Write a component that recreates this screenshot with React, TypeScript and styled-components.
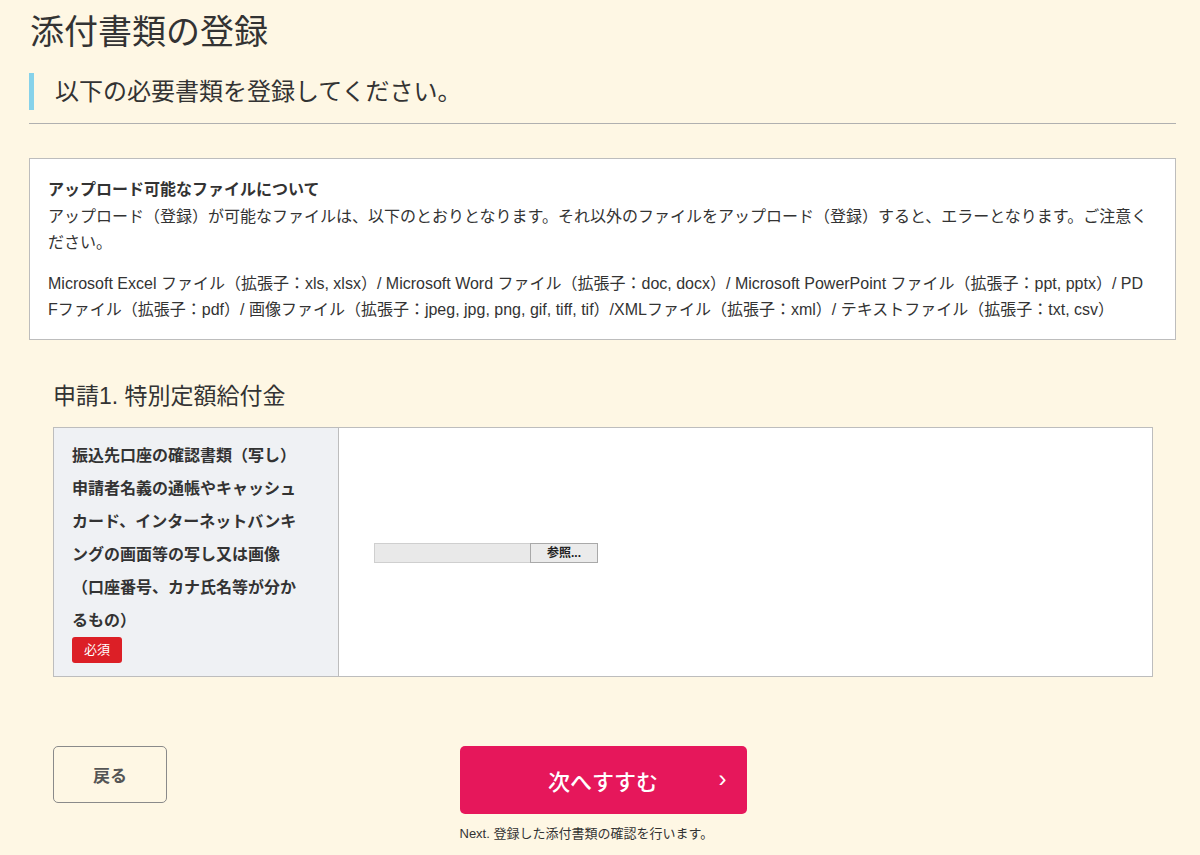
import React from "react";
import styled, { createGlobalStyle } from "styled-components";

const GlobalStyle = createGlobalStyle`
  html, body {
    margin: 0;
    padding: 0;
    background: #fef7e4;
  }
  body {
    font-family: "Liberation Sans", "Noto Sans CJK JP", sans-serif;
    color: #333;
  }
  * { box-sizing: border-box; }
`;

const Page = styled.div`
  width: 1200px;
  min-height: 855px;
  padding: 10px 24px 20px 29px;
`;

const Title = styled.h1`
  margin: 0;
  font-size: 34px;
  line-height: 44px;
  font-weight: 400;
  color: #333;
  padding-left: 1px;
`;

const Lead = styled.h2`
  margin: 19px 0 0;
  border-left: 5px solid #86d2ea;
  padding-left: 21px;
  font-size: 24px;
  line-height: 37px;
  font-weight: 400;
  color: #333;
`;

const Rule = styled.hr`
  margin: 13px 0 0;
  border: none;
  border-top: 1px solid #b0b0b0;
  height: 0;
`;

const InfoBox = styled.div`
  margin-top: 34px;
  background: #fff;
  border: 1px solid #bdbdbd;
  padding: 17px 24px 16px 18px;
  font-size: 16px;
  line-height: 26px;
  word-break: break-all;
`;

const InfoTitle = styled.div`
  font-weight: 700;
  line-height: 28px;
`;

const InfoPara = styled.p<{ $gap?: number }>`
  margin: ${(p) => p.$gap ?? 0}px 0 0;
`;

const Section = styled.section`
  padding: 0 23px 0 24px;
`;

const SectionTitle = styled.h3`
  margin: 41px 0 0;
  font-size: 23px;
  line-height: 30px;
  font-weight: 400;
  color: #333;
`;

const FormTable = styled.div`
  margin-top: 16px;
  display: grid;
  grid-template-columns: 285px 1fr;
  border: 1px solid #bdbdbd;
  background: #fff;
`;

const LabelCell = styled.div`
  background: #eff1f4;
  border-right: 1px solid #bdbdbd;
  padding: 11px 34px 13px 18px;
  font-size: 16px;
  line-height: 33px;
  font-weight: 700;
  color: #333;
`;

const Required = styled.span`
  display: block;
  width: fit-content;
  background: #dc1f26;
  color: #fff;
  font-size: 13px;
  font-weight: 400;
  line-height: 26px;
  padding: 0 12px;
  border-radius: 3px;
`;

const InputCell = styled.div`
  display: flex;
  align-items: center;
  padding-left: 35px;
`;

const FileInput = styled.div`
  display: flex;
  height: 20px;
  margin-top: 2px;
`;

const FileField = styled.div`
  width: 156px;
  height: 20px;
  background: #e9e9e9;
  border: 1px solid #cfcfcf;
  border-right: none;
`;

const FileButton = styled.div`
  width: 68px;
  height: 20px;
  background: #ebebeb;
  border: 1px solid #a9a9a9;
  font-size: 12px;
  font-weight: 700;
  line-height: 18px;
  text-align: center;
  color: #222;
`;

const ButtonRow = styled.div`
  margin-top: 69px;
  display: grid;
  grid-template-columns: 1fr auto 1fr;
  align-items: start;
`;

const BackButton = styled.button`
  justify-self: start;
  width: 114px;
  height: 57px;
  border: 1px solid #8a8a8a;
  border-radius: 5px;
  background: transparent;
  font-family: inherit;
  font-size: 17px;
  font-weight: 700;
  color: #555;
  cursor: pointer;
`;

const NextWrap = styled.div`
  display: flex;
  flex-direction: column;
`;

const NextButton = styled.button`
  position: relative;
  width: 287px;
  height: 68px;
  border: none;
  border-radius: 5px;
  background: #e6175b;
  color: #fff;
  font-family: inherit;
  font-size: 22px;
  font-weight: 500;
  display: flex;
  align-items: center;
  justify-content: center;
  cursor: pointer;
`;

const Chevron = styled.span`
  position: absolute;
  right: 20px;
  top: 50%;
  transform: translateY(-54%);
  font-size: 24px;
  font-weight: 400;
`;

const Caption = styled.div`
  margin-top: 11px;
  font-size: 13px;
  line-height: 18px;
  color: #333;
`;

export default function App() {
  return (
    <>
      <GlobalStyle />
      <Page>
        <Title>添付書類の登録</Title>
        <Lead>以下の必要書類を登録してください。</Lead>
        <Rule />
        <InfoBox>
          <InfoTitle>アップロード可能なファイルについて</InfoTitle>
          <InfoPara>
            アップロード（登録）が可能なファイルは、以下のとおりとなります。それ以外のファイルをアップロード（登録）すると、エラーとなります。ご注意ください。
          </InfoPara>
          <InfoPara $gap={15}>
            Microsoft Excel ファイル（拡張子：xls, xlsx）/ Microsoft Word ファイル（拡張子：doc, docx）/ Microsoft PowerPoint ファイル（拡張子：ppt, pptx）/ PDFファイル（拡張子：pdf）/ 画像ファイル（拡張子：jpeg, jpg, png, gif, tiff, tif）/XMLファイル（拡張子：xml）/ テキストファイル（拡張子：txt, csv）
          </InfoPara>
        </InfoBox>
        <Section>
          <SectionTitle>申請1. 特別定額給付金</SectionTitle>
          <FormTable>
            <LabelCell>
              振込先口座の確認書類（写し）申請者名義の通帳やキャッシュカード、インターネットバンキングの画面等の写し又は画像（口座番号、カナ氏名等が分かるもの）
              <Required>必須</Required>
            </LabelCell>
            <InputCell>
              <FileInput>
                <FileField />
                <FileButton>参照...</FileButton>
              </FileInput>
            </InputCell>
          </FormTable>
          <ButtonRow>
            <BackButton>戻る</BackButton>
            <NextWrap>
              <NextButton>
                次へすすむ
                <Chevron>›</Chevron>
              </NextButton>
              <Caption>Next. 登録した添付書類の確認を行います。</Caption>
            </NextWrap>
            <div />
          </ButtonRow>
        </Section>
      </Page>
    </>
  );
}
